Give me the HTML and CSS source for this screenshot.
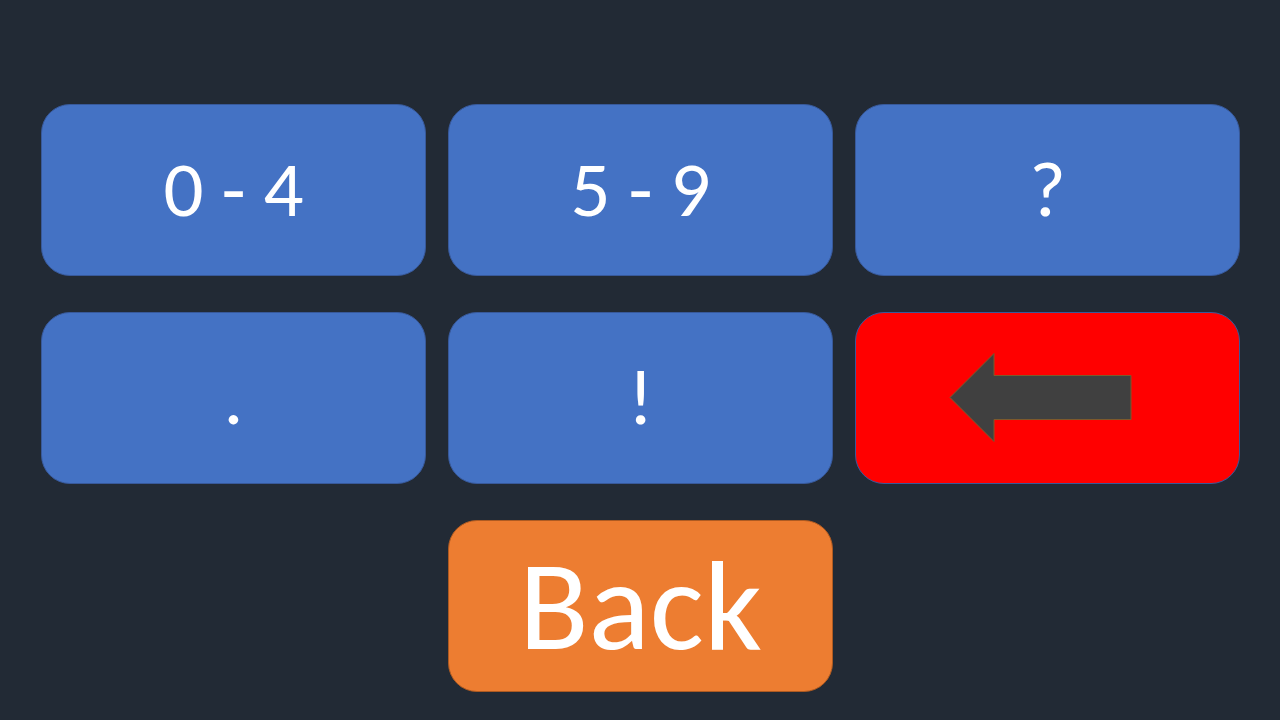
FILE: index.html
```html
<!DOCTYPE html>
<html lang="en">
<head>
<meta charset="utf-8">
<title>Symbols keypad</title>
<link rel="stylesheet" href="styles.css">
</head>
<body>
<main class="keypad">
  <button class="key" type="button">0 - 4</button>
  <button class="key" type="button">5 - 9</button>
  <button class="key" type="button">?</button>
  <button class="key" type="button">.</button>
  <button class="key" type="button">!</button>
  <button class="key key-delete" type="button" aria-label="Delete">
    <svg class="arrow" viewBox="0 0 184 90" aria-hidden="true"><path d="M2 45.500L46 1.500V23.500H183V67.500H46V89.500Z"/></svg>
  </button>
  <button class="key key-back" type="button">Back</button>
</main>
</body>
</html>
```

FILE: styles.css
```css
* {
  box-sizing: border-box;
}

body {
  margin: 0;
  min-height: 100vh;
  background: #222a35;
}

.keypad {
  display: grid;
  grid-template-columns: repeat(3, 1fr);
  grid-auto-rows: 172px;
  column-gap: 22px;
  row-gap: 36px;
  padding: 104px 40px 28px 41px;
}

.key {
  display: flex;
  align-items: center;
  justify-content: center;
  padding: 0 0 2px;
  border: 1px solid #38599a;
  border-radius: 29px;
  background: #4472c4;
  color: #fff;
  font-family: Carlito, Calibri, Lato, "Open Sans", sans-serif;
  font-size: 79px;
  line-height: 1;
}

.key-delete {
  padding: 0 15px 2px 0;
  background: #f00;
}

.arrow {
  width: 184px;
  fill: #404040;
  stroke: #7d5a2c;
  stroke-width: 1;
}

.key-back {
  grid-column: 2;
  border-color: #ae5a21;
  background: #ed7d31;
  font-size: 128px;
}
```
